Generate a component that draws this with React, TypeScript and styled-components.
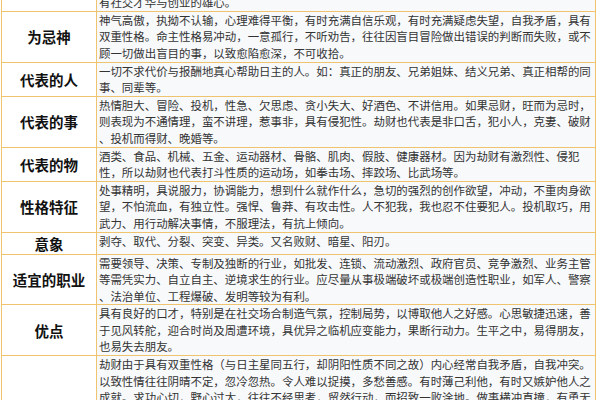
import React from 'react';
import styled, { createGlobalStyle } from 'styled-components';

const GlobalStyle = createGlobalStyle`
  html, body {
    margin: 0;
    padding: 0;
    background: #ffffff;
    overflow: hidden;
  }
`;

interface IRow {
  label: string;
  lines: string[];
}

const rows: IRow[] = [
  {
    label: '为喜神',
    lines: [
      '劫财为喜神时，为人热情坦率，意志坚强，勇于进取，能吃苦耐劳，有冲劲与魄力，不畏艰难，',
      '重义气，讲情面，朋友众多，能得同辈之助，善于把握时机，敢作敢为，处事果断，积极进取，',
      '有社交才华与创业的雄心。',
    ],
  },
  {
    label: '为忌神',
    lines: [
      '神气高傲，执拗不认输，心理难得平衡，有时充满自信乐观，有时充满疑虑失望，自我矛盾，具有',
      '双重性格。命主性格易冲动，一意孤行，不听劝告，往往因盲目冒险做出错误的判断而失败，或不',
      '顾一切做出盲目的事，以致愈陷愈深，不可收拾。',
    ],
  },
  {
    label: '代表的人',
    lines: [
      '一切不求代价与报酬地真心帮助日主的人。如：真正的朋友、兄弟姐妹、结义兄弟、真正相帮的同',
      '事、同辈等。',
    ],
  },
  {
    label: '代表的事',
    lines: [
      '热情胆大、冒险、投机，性急、欠思虑、贪小失大、好酒色、不讲信用。如果忌财，旺而为忌时，',
      '则表现为不通情理，蛮不讲理，惹事非，具有侵犯性。劫财也代表是非口舌，犯小人，克妻、破财',
      '、投机而得财、晚婚等。',
    ],
  },
  {
    label: '代表的物',
    lines: [
      '酒类、食品、机械、五金、运动器材、骨骼、肌肉、假肢、健康器材。因为劫财有激烈性、侵犯',
      '性，所以劫财也代表打斗性质的运动场，如拳击场、摔跤场、比武场等。',
    ],
  },
  {
    label: '性格特征',
    lines: [
      '处事精明，具说服力，协调能力，想到什么就作什么，急切的强烈的创作欲望，冲动，不重肉身欲',
      '望，不怕流血，有独立性。强悍、鲁莽、有攻击性。人不犯我，我也忍不住要犯人。投机取巧，用',
      '武力、用行动解决事情，不服理法，有抗上倾向。',
    ],
  },
  {
    label: '意象',
    lines: ['剥夺、取代、分裂、突变、异类。又名败财、暗星、阳刃。'],
  },
  {
    label: '适宜的职业',
    lines: [
      '需要领导、决策、专制及独断的行业，如批发、连锁、流动激烈、政府官员、竞争激烈、业务主管',
      '等需凭实力、自立自主、逆境求生的行业。应尽量从事极端破坏或极端创造性职业，如军人、警察',
      '、法治单位、工程爆破、发明等较为有利。',
    ],
  },
  {
    label: '优点',
    lines: [
      '具有良好的口才，特别是在社交场合制造气氛，控制局势，以博取他人之好感。心思敏捷迅速，善',
      '于见风转舵，迎合时尚及周遭环境，具优异之临机应变能力，果断行动力。生平之中，易得朋友，',
      '也易失去朋友。',
    ],
  },
  {
    label: '缺点',
    lines: [
      '劫财由于具有双重性格（与日主星同五行，却阴阳性质不同之故）内心经常自我矛盾，自我冲突。',
      '以致性情往往阴晴不定，忽冷忽热。令人难以捉摸，多愁善感。有时薄己利他，有时又嫉妒他人之',
      '成就。求功心切，野心过大，往往不经思考，贸然行动，而招致一败涂地。做事横冲直撞，有勇无',
      '谋，不善理财，易因一时冲动而破财，与人合作常生争执，难以持久。',
      '对人对事缺乏耐心，好胜心强，容易得罪他人而不自知。',
      '婚姻感情方面多波折，宜多加修养，克制情绪。',
      '凡事三思而后行，方可趋吉避凶。',
    ],
  },
];

const Table = styled.table`
  width: 595px;
  margin: -40px 0 0 1px;
  border-collapse: collapse;
  table-layout: fixed;
  font-family: 'Noto Sans CJK SC', 'Noto Sans', sans-serif;
`;

const Row = styled.tr``;

const Label = styled.th`
  width: 94px;
  padding: 0;
  border: 1px solid #f0c36e;
  background: #ffffff;
  color: #111111;
  font-size: 14.5px;
  font-weight: 700;
  text-align: center;
  vertical-align: middle;
  white-space: nowrap;
`;

const Content = styled.td`
  padding: 0 0 0 2px;
  border: 1px solid #f0c36e;
  background: #f8f9fb;
  color: #333333;
  font-size: 11.45px;
  line-height: 16.6px;
  vertical-align: top;
  overflow: hidden;
`;

const Line = styled.div`
  white-space: nowrap;
`;

const App = () => {
  return (
    <>
      <GlobalStyle />
      <Table>
        <tbody>
          {rows.map((row) => (
            <Row key={row.label}>
              <Label>{row.label}</Label>
              <Content>
                {row.lines.map((line, i) => (
                  <Line key={i}>{line}</Line>
                ))}
              </Content>
            </Row>
          ))}
        </tbody>
      </Table>
    </>
  );
};

export default App;
